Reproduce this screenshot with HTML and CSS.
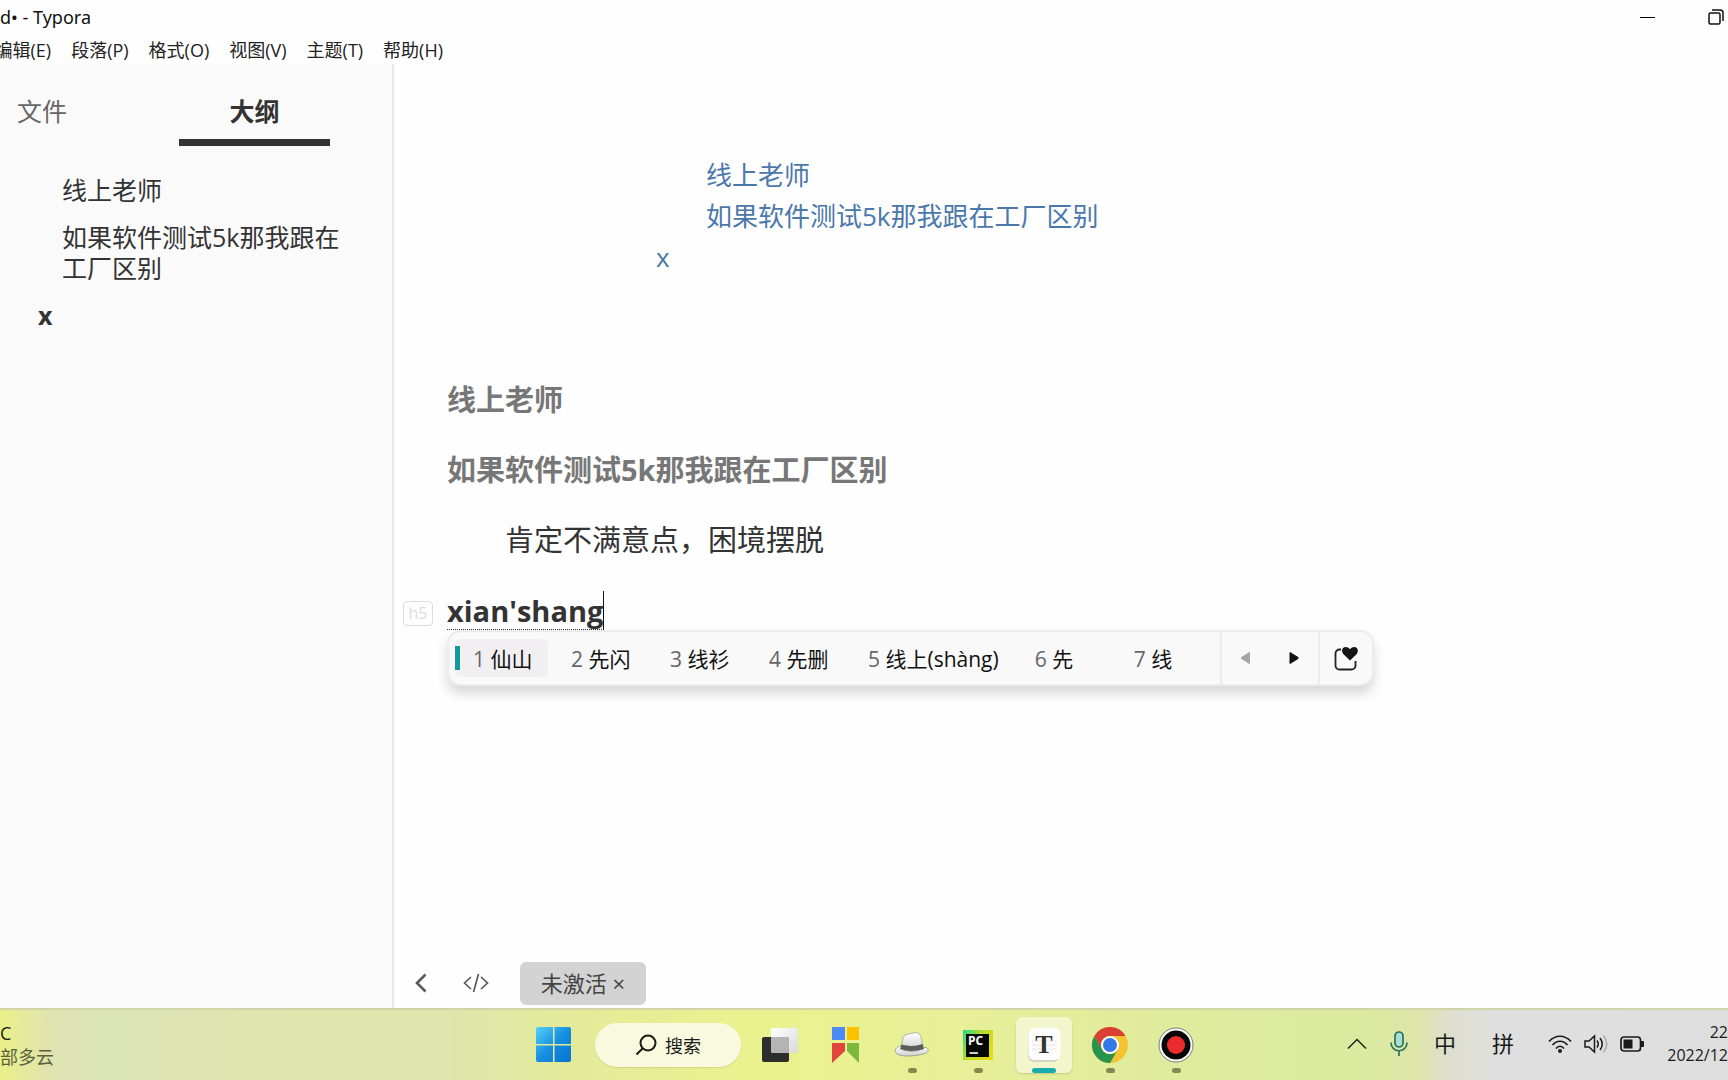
FILE: index.html
```html
<!DOCTYPE html>
<html lang="zh-CN">
<head>
<meta charset="utf-8">
<title>Typora</title>
<link rel="stylesheet" href="styles.css">
</head>
<body>
<header class="titlebar">
  <div class="title"><span>d• - Typora</span></div>
  <div class="window-controls">
    <button class="win-btn" aria-label="最小化"><svg width="16" height="16" viewBox="0 0 16 16"><path d="M0 8.500H15" stroke="#000" stroke-width="1"/></svg></button>
    <button class="win-btn" aria-label="还原"><svg width="16" height="16" viewBox="0 0 16 16" fill="none" stroke="#111" stroke-width="1.500"><rect x="1" y="4" width="11" height="11" rx="1.500"/><path d="M4 1h8a3 3 0 0 1 3 3v8"/></svg></button>
  </div>
</header>
<nav class="menubar">
  <div class="menu">
    <button>编辑(E)</button><button>段落(P)</button><button>格式(O)</button><button>视图(V)</button><button>主题(T)</button><button>帮助(H)</button>
  </div>
</nav>
<div class="workspace">
  <aside class="sidebar">
    <div class="tabs">
      <button class="tab tab-files">文件</button>
      <button class="tab tab-outline active">大纲</button>
    </div>
    <ul class="outline">
      <li class="sub"><a href="#h-1">线上老师</a></li>
      <li class="sub"><a href="#h-2">如果软件测试5k那我跟在工厂区别</a></li>
      <li class="current"><a href="#h-3">x</a></li>
    </ul>
  </aside>
  <main class="editor">
    <article class="document">
      <ul class="toc">
        <li class="sub"><a href="#h-1">线上老师</a></li>
        <li class="sub"><a href="#h-2">如果软件测试5k那我跟在工厂区别</a></li>
        <li class="top"><a href="#h-3">x</a></li>
      </ul>
      <h6 id="h-1">线上老师</h6>
      <h6 id="h-2">如果软件测试5k那我跟在工厂区别</h6>
      <p>肯定不满意点，困境摆脱</p>
      <h5 id="h-3"><span class="level">h5</span><span class="composing">xian'shang</span>
        <div class="ime">
          <div class="candidates">
            <button class="candidate selected"><i>1</i> 仙山</button>
            <button class="candidate"><i>2</i> 先闪</button>
            <button class="candidate"><i>3</i> 线衫</button>
            <button class="candidate"><i>4</i> 先删</button>
            <button class="candidate"><i>5</i> 线上(shàng)</button>
            <button class="candidate"><i>6</i> 先</button>
            <button class="candidate"><i>7</i> 线</button>
          </div>
          <div class="pager">
            <button aria-label="上一页"><svg width="12" height="14" viewBox="0 0 12 14"><path d="M9.500 1.500v11L1.500 7.600q-.8-.6 0-1.200z" fill="#a5a5a5" stroke="#a5a5a5" stroke-linejoin="round"/></svg></button>
            <button aria-label="下一页"><svg width="12" height="14" viewBox="0 0 12 14"><path d="M2 1.500v11l8-4.900q.8-.6 0-1.200z" fill="#111" stroke="#111" stroke-linejoin="round"/></svg></button>
          </div>
          <button class="favorite" aria-label="表情"><svg width="24" height="26" viewBox="0 0 24 26"><path d="M7 4.500H5.500a4 4 0 0 0-4 4v12a4 4 0 0 0 4 4h12a4 4 0 0 0 4-4V16" fill="none" stroke="#222" stroke-width="1.800"/><path d="M16 15.500l-6.500-6.300C6.500 5.500 8.500 2 11.700 2c2 0 3.500 1 4.300 2.300C16.800 3 18.200 2 20.200 2c3.200 0 5 3.500 2.300 7.200z" fill="#151515"/></svg></button>
        </div>
      </h5>
    </article>
    <footer class="statusbar">
      <button class="status-icon" aria-label="侧边栏"><svg width="14" height="20" viewBox="0 0 14 20"><path d="M11.500 1.500L3 10l8.500 8.500" fill="none" stroke="#5a5a5a" stroke-width="2.600"/></svg></button>
      <button class="status-icon" aria-label="源代码模式"><svg width="26" height="20" viewBox="0 0 26 20"><path d="M8 4L1.500 10 8 16M18 4l6.500 6L18 16M15.500 1l-5 18" fill="none" stroke="#5a5a5a" stroke-width="1.700"/></svg></button>
      <button class="license">未激活 <span>×</span></button>
    </footer>
  </main>
</div>
<footer class="taskbar">
  <div class="weather"><span class="temp">C</span><span>部多云</span></div>
  <div class="apps">
    <button class="app" aria-label="开始"><svg width="36" height="36" viewBox="0 0 36 36"><defs><linearGradient id="win" x1="0" y1="0" x2="1" y2="1"><stop offset="0" stop-color="#57d0fa"/><stop offset=".5" stop-color="#168fe0"/><stop offset="1" stop-color="#0872cf"/></linearGradient></defs><path fill="url(#win)" d="M2 0h15v17H0V2q0-2 2-2zM18.500 0H33q2 0 2 2v15H18.500zM0 18.500h17V35H2q-2 0-2-2zM18.500 18.500H35V33q0 2-2 2H18.500z"/></svg></button>
    <button class="search"><svg width="22" height="22" viewBox="0 0 22 22"><g fill="none" stroke="#1b1b12" stroke-width="2"><circle cx="13" cy="9" r="7.500"/><path d="M7.500 14.500L1.500 20.500"/></g></svg>搜索</button>
    <button class="app" aria-label="任务视图"><svg width="36" height="36" viewBox="0 0 36 36"><defs><linearGradient id="tv" x1="0" y1="0" x2="1" y2="1"><stop offset="0" stop-color="#fff"/><stop offset="1" stop-color="#d9d9d9"/></linearGradient></defs><rect y="10" width="27" height="25" rx="2" fill="#2d2d2b"/><rect x="9" y="1" width="27" height="25" rx="2" fill="url(#tv)"/><path d="M9 10h18v16H11q-2 0-2-2z" fill="#b4b4b4"/></svg></button>
    <button class="app" aria-label="收藏"><svg width="28" height="36" viewBox="0 0 28 36"><path fill="#4c8bf5" d="M0 0h13v13H0z"/><path fill="#fcc200" d="M15 0h12v13H15z"/><path fill="#e2453c" d="M0 16h13v8L0 36z"/><path fill="#7bb83d" d="M15 16h12v20L15 24z"/></svg></button>
    <button class="app running" aria-label="帽子"><svg width="36" height="36" viewBox="0 0 36 36"><defs><linearGradient id="hat" x1="0" y1="0" x2="0" y2="1"><stop offset="0" stop-color="#fff"/><stop offset="1" stop-color="#cfcfcf"/></linearGradient></defs><path d="M7 19C0 20 0 26 4 27.500c7 3 21 1 27-1 5-2 4-7-2-6z" fill="url(#hat)" stroke="#8a8a80" stroke-width=".7"/><path d="M6.500 22L9 11q1-4 5-4l5-1q6-2 8 4l2.500 12q-13 5-23 0z" fill="url(#hat)" stroke="#9a9a90" stroke-width=".7"/><path d="M7.300 17.500q11 3 21.400-.5l1 5q-13 4-23.200 0z" fill="#5c5c5c"/></svg></button>
    <button class="app running" aria-label="PyCharm"><svg width="30" height="30" viewBox="0 0 30 30"><defs><linearGradient id="pc" x1="0" y1="0" x2="1" y2=".6"><stop offset="0" stop-color="#20d789"/><stop offset=".5" stop-color="#b6dd2c"/><stop offset="1" stop-color="#e5dc13"/></linearGradient></defs><path fill="url(#pc)" d="M0 0h30v30H0z"/><path fill="#050805" d="M3 4h23v23H3z"/><path d="M6.500 23H15" stroke="#fff" stroke-width="1.600"/><text x="5" y="15" font-family="Open Sans, sans-serif" font-weight="700" font-size="12" fill="#fff">PC</text></svg></button>
    <button class="app running active" aria-label="Typora"><svg width="34" height="34" viewBox="0 0 34 34"><rect x="1" y="3" width="31" height="31" rx="6" fill="#d4d4c8"/><rect x="1.500" y="0" width="32" height="32" rx="6" fill="#fdfdfd"/><path d="M5 13h25M5 17h25M5 21h25" stroke="#e6e6e6"/><text x="17" y="25" text-anchor="middle" font-family="Liberation Serif, serif" font-weight="700" font-size="26" fill="#333">T</text></svg></button>
    <button class="app running" aria-label="Chrome"><svg width="36" height="36" viewBox="0 0 36 36"><circle cx="18" cy="18" r="18" fill="#f4c430"/><path d="M2.400 9A18 18 0 0 1 33.600 9H18a9 9 0 0 0-7.800 13.500z" fill="#d93f33"/><path d="M2.400 9A18 18 0 0 0 18 36l7.800-13.500A9 9 0 0 1 10.200 22.500z" fill="#27934b"/><circle cx="18" cy="18" r="9" fill="#fff"/><circle cx="18" cy="18" r="7" fill="#3478e8"/></svg></button>
    <button class="app running" aria-label="录屏"><svg width="36" height="36" viewBox="0 0 36 36"><circle cx="18" cy="18" r="17" fill="#fff" stroke="#777" stroke-width="1"/><circle cx="18" cy="18" r="14.500" fill="#050505"/><circle cx="18" cy="18" r="9" fill="#ec2a2d"/></svg></button>
  </div>
  <div class="tray">
    <button class="tray-chevron" aria-label="显示隐藏的图标"><svg width="20" height="12" viewBox="0 0 20 12"><path d="M1 10.500l9-9 9 9" fill="none" stroke="#222" stroke-width="1.500"/></svg></button>
    <button class="tray-mic" aria-label="麦克风"><svg width="18" height="26" viewBox="0 0 18 26" fill="none" stroke="#28715f" stroke-width="1.700"><rect x="5" y="1" width="8" height="15" rx="4" fill="#a9dfd0"/><path d="M1 11.500c0 11 16 11 16 0M9 20v5"/></svg></button>
    <button class="tray-lang">中</button>
    <button class="tray-mode">拼</button>
    <button class="tray-system" aria-label="系统状态">
      <svg width="24" height="20" viewBox="0 0 24 20"><g fill="none" stroke="#1b1b1b" stroke-width="1.700"><path d="M1 7.500c6.500-7 15.500-7 22 0M4.500 11c4.500-5 10.500-5 15 0M8 14.500c2.500-3 5.500-3 8 0"/></g><circle cx="12" cy="17" r="2" fill="#1b1b1b"/></svg>
      <svg width="24" height="20" viewBox="0 0 24 20"><g fill="none" stroke="#1b1b1b" stroke-width="1.500"><path d="M1 7v6h4l5.500 5V2L5 7zM13 6.500q2.500 3.500 0 7M16 4q4.500 6 0 12"/><path d="M19.500 1.500q6.500 8.500 0 17" stroke="#aaa"/></g></svg>
      <svg width="24" height="20" viewBox="0 0 24 20"><rect x="1" y="3" width="19.500" height="14" rx="3" fill="none" stroke="#1b1b1b" stroke-width="1.700"/><rect x="3.500" y="5.500" width="9" height="9" fill="#1b1b1b"/><path d="M21 7h2q1 0 1 1v4q0 1-1 1h-2z" fill="#1b1b1b"/></svg>
    </button>
    <button class="clock"><span>22</span><span>2022/12</span></button>
  </div>
</footer>
</body>
</html>
```
FILE: styles.css
```css
* {
  box-sizing: border-box;
}

body {
  margin: 0;
  min-height: 100vh;
  display: flex;
  flex-direction: column;
  overflow-x: hidden;
  background: #fefefe;
  color: #333;
  font-family: "Open Sans", "Noto Sans CJK SC", sans-serif;
}

button {
  margin: 0;
  padding: 0;
  border: 0;
  background: none;
  color: inherit;
  font: inherit;
}

svg {
  display: block;
  flex: none;
}

a {
  color: inherit;
  text-decoration: none;
}

ul {
  margin: 0;
  padding: 0;
  list-style: none;
}

/* Title bar and menu */
.titlebar {
  display: flex;
  justify-content: space-between;
  height: 34px;
  overflow: hidden;
  color: #111;
  font-family: "Noto Sans", sans-serif;
  font-size: 18px;
  line-height: 34px;
}

.title {
  display: flex;
  justify-content: flex-end;
  width: 91px;
  white-space: nowrap;
}

.window-controls {
  display: flex;
  gap: 52px;
  padding-right: 4px;
}

.win-btn {
  display: flex;
  align-items: center;
}

.menubar {
  height: 30px;
  overflow: hidden;
  color: #222;
  font-size: 18px;
  line-height: 32px;
}

.menu {
  display: flex;
  justify-content: flex-end;
  gap: 20px;
  width: 443px;
  white-space: nowrap;
}

.menu button {
  flex: none;
}

/* Workspace */
.workspace {
  flex: 1;
  display: flex;
}

.sidebar {
  flex: none;
  width: 394px;
  border-right: 2px solid #e8e8e8;
  background: #fafafa;
  font-size: 25px;
}

.tabs {
  display: flex;
  gap: 95px;
  height: 82px;
}

.tab {
  padding-top: 12px;
  color: #666;
  line-height: 36px;
}

.tab-files {
  width: 84px;
}

.tab-outline {
  width: 151px;
}

.tab.active {
  padding-top: 18px;
  border-bottom: 7px solid #333;
  color: #333;
  font-weight: 700;
}

.outline {
  display: grid;
  gap: 16px;
  padding: 29px 48px 0 38px;
  line-height: 31px;
}

.outline .sub {
  padding-left: 24px;
}

.outline .current {
  font-weight: 700;
}

.editor {
  flex: 1;
  display: flex;
  flex-direction: column;
  justify-content: space-between;
  min-width: 0;
}

.document {
  padding: 91px 53px 0;
  font-size: 29px;
  line-height: 40px;
}

.toc {
  padding: 0 209px 102px;
  color: #4a78ab;
  font-size: 26px;
  line-height: 41px;
}

.toc .sub {
  padding-left: 50px;
}

h5,
h6,
.document p {
  margin: 0 0 31px;
  font-size: 29px;
}

h6 {
  margin-bottom: 30px;
  color: #777;
}

.document p {
  padding-left: 58px;
}

h5 {
  position: relative;
}

.composing {
  display: inline-block;
  height: 39px;
  border-right: 1px solid #111;
  border-bottom: 1px dotted #333;
  line-height: 40px;
}

.level {
  position: absolute;
  top: 10px;
  left: -44px;
  width: 30px;
  height: 25px;
  border: 1px solid #ddd;
  border-radius: 4px;
  color: #ddd;
  font-size: 16px;
  font-weight: 400;
  line-height: 23px;
  text-align: center;
}

/* Input method candidate window */
.ime {
  position: absolute;
  top: 39px;
  left: 0;
  display: flex;
  width: 927px;
  height: 56px;
  border: 2px solid #ececec;
  border-radius: 14px;
  background: #f9f9f9;
  box-shadow: 0 8px 12px 0 #00000026;
  color: #111;
  font-size: 21px;
  font-weight: 400;
}

.candidates {
  flex: 1;
  display: flex;
  align-items: center;
  padding-left: 6px;
}

.candidate {
  min-width: 99px;
  height: 38px;
  padding: 0 18px 2px;
  border-radius: 6px;
  text-align: left;
  white-space: nowrap;
}

.candidate i {
  color: #666;
  font-style: normal;
}

.candidate.selected {
  min-width: 93px;
  margin-right: 5px;
  padding-right: 12px;
  background: linear-gradient(#149a9a, #149a9a) 0 50% / 5px 24px no-repeat, #f1eff1;
}

.pager {
  display: flex;
  width: 98px;
  border-left: 2px solid #ececec;
}

.pager button,
.favorite {
  flex: 1;
  display: grid;
  place-items: center;
}

.favorite {
  flex: none;
  width: 54px;
  border-left: 2px solid #ececec;
}

.statusbar {
  display: flex;
  align-items: center;
  padding: 0 0 3px 20px;
}

.status-icon {
  margin-right: 35px;
  padding-bottom: 2px;
}

.license {
  width: 126px;
  height: 43px;
  margin-left: -4px;
  padding-bottom: 3px;
  border-radius: 6px;
  background: #d3d3d3;
  color: #444;
  font-size: 22px;
}

/* Taskbar */
.taskbar {
  display: grid;
  grid-template-columns: 1fr auto 1fr;
  height: 72px;
  overflow: hidden;
  border-top: 2px solid #d0d4a6;
  background: linear-gradient(90deg, #e9f088 0, #dfe3b1 3%, #dbe4b6 6%, #e0e4ae 14%, #e0e4ad 26%, #e2ea9b 32%, #eaf28e 44%, #e7ef98 56%, #dfeb9d 68%, #dbea9f 79%, #dde5a9 82%, #dedfd0 84%, #dfdfe0 87%, #dedede 100%);
  color: #1b1b1b;
}

.weather {
  display: flex;
  flex-direction: column;
  padding-top: 11px;
  font-size: 18px;
  line-height: 24px;
}

.weather span {
  color: #5d6040;
}

.weather .temp {
  color: #1b1b1b;
}

.apps {
  display: flex;
  align-items: center;
  padding-left: 2px;
}

.app {
  position: relative;
  display: grid;
  place-items: center;
  width: 66px;
  height: 56px;
}

.app.active {
  width: 56px;
  margin: 0 5px;
  border-radius: 6px;
  background: #f3f6cd;
  box-shadow: 0 1px 2px #00000026;
}

.app.running::after {
  content: "";
  position: absolute;
  bottom: 0;
  left: calc(50% - 4px);
  width: 9px;
  height: 5px;
  border-radius: 3px;
  background: #85894f;
}

.app.active::after {
  left: calc(50% - 12px);
  width: 24px;
  background: #19adad;
}

.search {
  display: flex;
  align-items: center;
  justify-content: center;
  gap: 8px;
  width: 146px;
  height: 44px;
  margin: 0 6px 0 8px;
  border-radius: 22px;
  background: #f8f9df;
  box-shadow: 0 1px 1px #0000001a;
  font-size: 18px;
}

.tray {
  display: flex;
  justify-content: flex-end;
  padding-bottom: 3px;
}

.tray button {
  display: flex;
  align-items: center;
  justify-content: center;
}

.tray-chevron,
.tray-mic {
  width: 42px;
}

.tray-lang,
.tray-mode {
  font-size: 22px;
}

.tray button.tray-lang,
.tray button.tray-mode {
  padding-bottom: 3px;
}

.tray-lang {
  width: 50px;
}

.tray-mode {
  width: 66px;
}

.tray-system {
  gap: 12px;
  padding: 0 12px;
}

.tray .clock {
  flex-direction: column;
  align-items: flex-end;
  width: 72px;
  font-size: 16px;
  line-height: 23px;
}
```
